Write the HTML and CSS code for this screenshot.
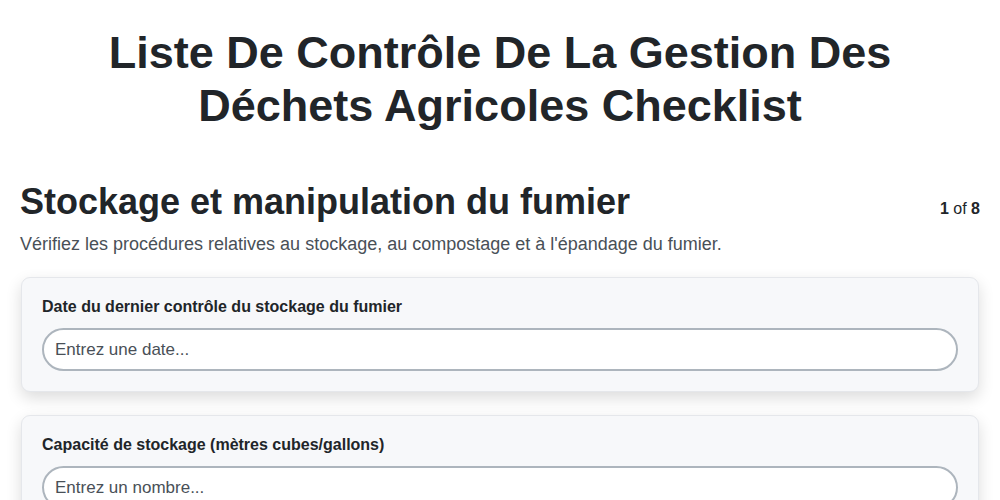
FILE: index.html
```html
<!DOCTYPE html>
<html lang="fr">
<head>
  <meta charset="UTF-8">
  <title>Liste De Contrôle De La Gestion Des Déchets Agricoles Checklist</title>
  <link rel="stylesheet" href="styles.css">
</head>
<body>

<div class="page">
  <h1 class="title">Liste De Contrôle De La Gestion Des Déchets Agricoles Checklist</h1>

  <div class="section-head">
    <h2>Stockage et manipulation du fumier</h2>
    <span class="step"><b>1</b> of <b>8</b></span>
  </div>
  <p class="section-desc">Vérifiez les procédures relatives au stockage, au compostage et à l'épandage du fumier.</p>

  <div class="card">
    <label for="q1">Date du dernier contrôle du stockage du fumier</label>
    <input id="q1" type="text" placeholder="Entrez une date...">
  </div>

  <div class="card">
    <label for="q2">Capacité de stockage (mètres cubes/gallons)</label>
    <input id="q2" type="text" placeholder="Entrez un nombre...">
  </div>
</div>

</body>
</html>
```

FILE: styles.css
```css
body {
  margin: 0;
  font-family: "Liberation Sans", Arial, sans-serif;
  color: #212529;
  background: #fff;
}
.page {
  padding: 0 20px;
}
.title {
  margin: 26px auto 0;
  max-width: 840px;
  text-align: center;
  font-size: 45px;
  line-height: 53px;
  font-weight: bold;
}
.section-head {
  display: flex;
  justify-content: space-between;
  align-items: baseline;
  margin-top: 48px;
}
.section-head h2 {
  margin: 0;
  font-size: 36px;
  line-height: 44px;
}
.step {
  font-size: 16px;
}
.section-desc {
  margin: 10px 0 22px;
  font-size: 18px;
  line-height: 21px;
  color: #495057;
}
.card {
  margin: 0 1px 23px;
  padding: 20px;
  background: #f7f8fa;
  border: 1px solid #e5e7eb;
  border-radius: 9px;
  box-shadow: 0 6px 16px rgba(0, 0, 0, 0.14);
}
.card label {
  display: block;
  font-weight: bold;
  font-size: 16px;
  line-height: 18px;
  margin-bottom: 12px;
}
.card input {
  display: block;
  box-sizing: border-box;
  width: 100%;
  height: 43px;
  padding: 0 11px;
  border: 2px solid #adb5bd;
  border-radius: 22px;
  background: #fff;
  font-family: inherit;
  font-size: 17px;
  color: #212529;
}
.card input::placeholder {
  color: #495057;
}
```
